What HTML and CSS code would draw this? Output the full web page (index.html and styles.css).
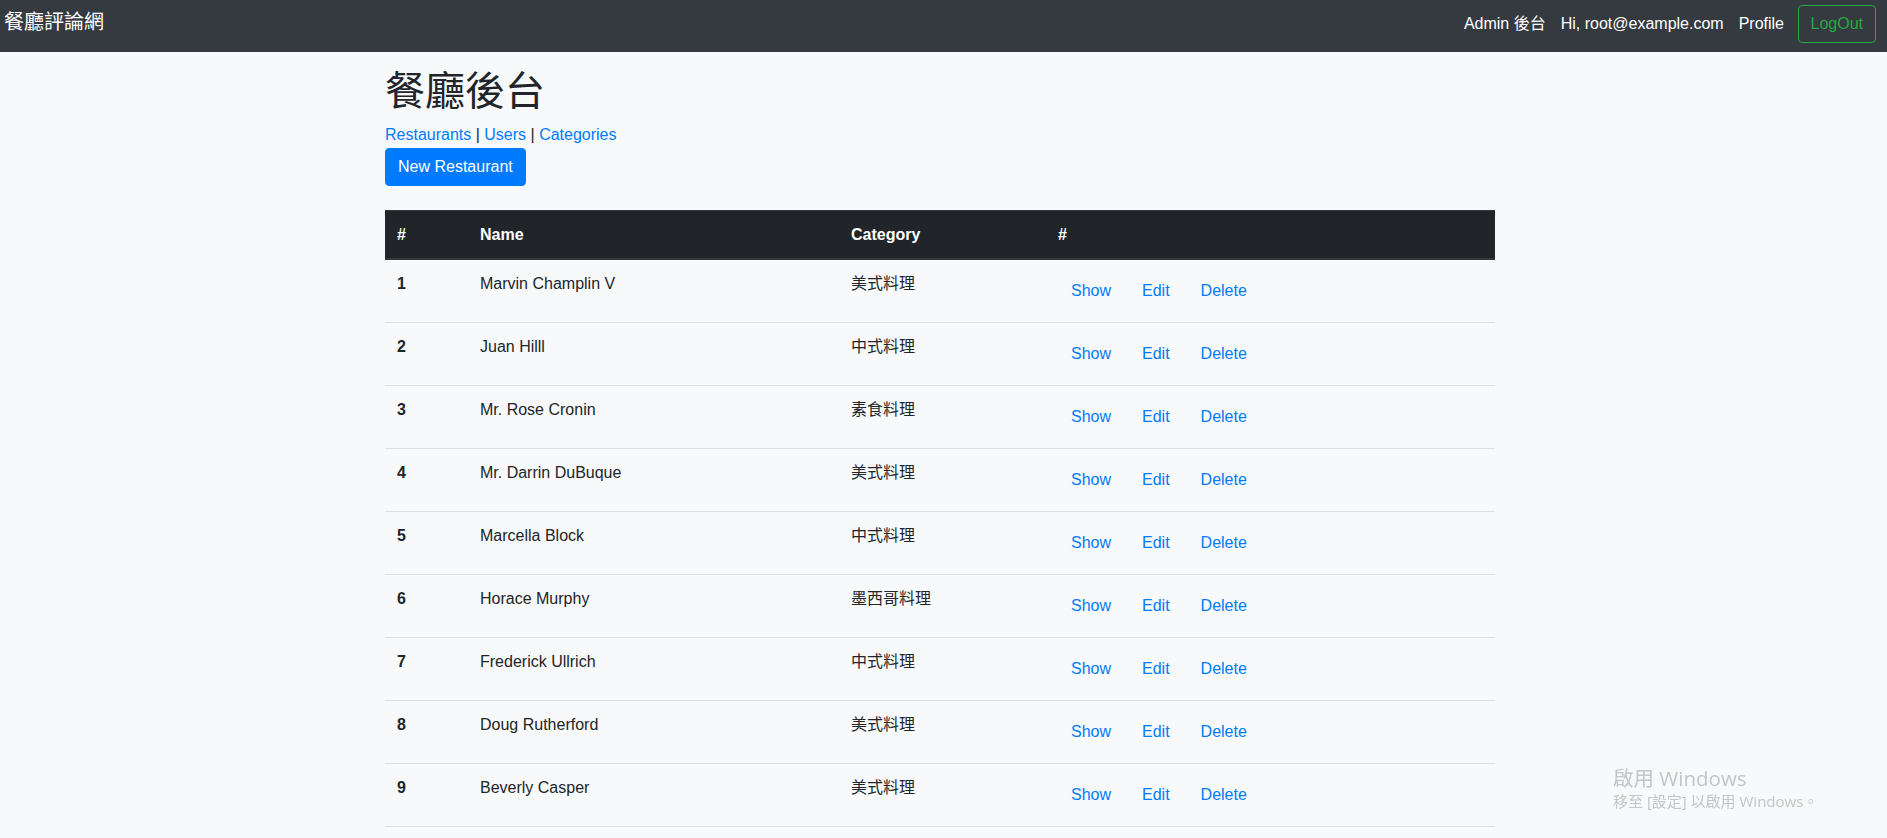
FILE: index.html
```html
<!DOCTYPE html>
<html lang="zh-Hant">
<head>
<meta charset="utf-8">
<title>餐廳評論網</title>
<link rel="stylesheet" href="styles.css">
</head>
<body>
<nav class="topbar">
  <a class="brand" href="#">餐廳評論網</a>
  <div class="topnav">
    <a class="navlink" href="#">Admin 後台</a>
    <a class="navlink" href="#">Hi, root@example.com</a>
    <a class="navlink" href="#">Profile</a>
    <a class="btn-outline" href="#">LogOut</a>
  </div>
</nav>

<main class="container">
  <h1 class="title">餐廳後台</h1>
  <div class="sublinks">
    <a href="#">Restaurants</a> | <a href="#">Users</a> | <a href="#">Categories</a>
  </div>
  <a class="btn-primary" href="#">New Restaurant</a>

  <table class="data">
    <thead>
      <tr>
        <th class="c-id">#</th>
        <th class="c-name">Name</th>
        <th class="c-cat">Category</th>
        <th class="c-act">#</th>
      </tr>
    </thead>
    <tbody>
      <tr><td class="idcell">1</td><td>Marvin Champlin V</td><td>美式料理</td><td><div class="actions"><a class="btn-link" href="#">Show</a><a class="btn-link" href="#">Edit</a><a class="btn-link" href="#">Delete</a></div></td></tr>
      <tr><td class="idcell">2</td><td>Juan Hilll</td><td>中式料理</td><td><div class="actions"><a class="btn-link" href="#">Show</a><a class="btn-link" href="#">Edit</a><a class="btn-link" href="#">Delete</a></div></td></tr>
      <tr><td class="idcell">3</td><td>Mr. Rose Cronin</td><td>素食料理</td><td><div class="actions"><a class="btn-link" href="#">Show</a><a class="btn-link" href="#">Edit</a><a class="btn-link" href="#">Delete</a></div></td></tr>
      <tr><td class="idcell">4</td><td>Mr. Darrin DuBuque</td><td>美式料理</td><td><div class="actions"><a class="btn-link" href="#">Show</a><a class="btn-link" href="#">Edit</a><a class="btn-link" href="#">Delete</a></div></td></tr>
      <tr><td class="idcell">5</td><td>Marcella Block</td><td>中式料理</td><td><div class="actions"><a class="btn-link" href="#">Show</a><a class="btn-link" href="#">Edit</a><a class="btn-link" href="#">Delete</a></div></td></tr>
      <tr><td class="idcell">6</td><td>Horace Murphy</td><td>墨西哥料理</td><td><div class="actions"><a class="btn-link" href="#">Show</a><a class="btn-link" href="#">Edit</a><a class="btn-link" href="#">Delete</a></div></td></tr>
      <tr><td class="idcell">7</td><td>Frederick Ullrich</td><td>中式料理</td><td><div class="actions"><a class="btn-link" href="#">Show</a><a class="btn-link" href="#">Edit</a><a class="btn-link" href="#">Delete</a></div></td></tr>
      <tr><td class="idcell">8</td><td>Doug Rutherford</td><td>美式料理</td><td><div class="actions"><a class="btn-link" href="#">Show</a><a class="btn-link" href="#">Edit</a><a class="btn-link" href="#">Delete</a></div></td></tr>
      <tr><td class="idcell">9</td><td>Beverly Casper</td><td>美式料理</td><td><div class="actions"><a class="btn-link" href="#">Show</a><a class="btn-link" href="#">Edit</a><a class="btn-link" href="#">Delete</a></div></td></tr>
    </tbody>
  </table>
</main>

<div class="watermark">
  <div class="wm-title">啟用 Windows</div>
  <div class="wm-sub">移至 [設定] 以啟用 Windows。</div>
</div>
</body>
</html>
```

FILE: styles.css
```css
* { box-sizing: border-box; }

html, body { margin: 0; padding: 0; }

body {
  background: #f8f9fa;
  color: #212529;
  font-family: "Liberation Sans", "Noto Sans CJK TC", sans-serif;
  font-size: 16px;
  line-height: 24px;
  overflow: hidden;
}

a { text-decoration: none; color: #007bff; }

/* ---------- top bar ---------- */
.topbar {
  display: flex;
  justify-content: space-between;
  align-items: flex-start;
  height: 52px;
  background: #343a40;
  padding: 5px 11px 0 4px;
}

.brand {
  color: #fff;
  font-size: 20px;
  line-height: 30px;
  padding-top: 2px;
}

.topnav {
  display: flex;
  align-items: center;
  height: 38px;
}

.navlink {
  color: #fff;
  padding: 0 7.5px;
  line-height: 24px;
}

.btn-outline {
  margin-left: 6px;
  color: #28a745;
  border: 1px solid #28a745;
  border-radius: 4px;
  padding: 6px 12px;
  line-height: 24px;
}

/* ---------- content ---------- */
.container {
  width: 1110px;
  margin-left: calc(50% - 558.5px);
  padding-top: 15px;
}

.title {
  margin: 0 0 8px;
  font-size: 40px;
  line-height: 48px;
  font-weight: 400;
}

.sublinks { line-height: 24px; }

.btn-primary {
  display: inline-block;
  margin-top: 1px;
  background: #007bff;
  border: 1px solid #007bff;
  color: #fff;
  border-radius: 4px;
  padding: 6px 12px;
  line-height: 24px;
}

/* ---------- table ---------- */
.data {
  width: 100%;
  margin-top: 24px;
  border-collapse: collapse;
  table-layout: fixed;
}

.data th {
  text-align: left;
  vertical-align: bottom;
  padding: 12px 12px 11px;
  background: #212529;
  color: #fff;
  font-weight: 700;
  border-top: 1px solid #32383e;
  border-bottom: 2px solid #32383e;
}

.c-id { width: 83px; }
.c-name { width: 371px; }
.c-cat { width: 207px; }

.data td {
  padding: 12px;
  vertical-align: top;
  border-top: 1px solid #dee2e6;
}

.data tbody tr:last-child td { border-bottom: 1px solid #dee2e6; }

.data td.idcell { font-weight: 700; }

.actions {
  display: flex;
  gap: 5px;
}

.btn-link {
  display: inline-block;
  padding: 6px 12px;
  border: 1px solid transparent;
  line-height: 24px;
  color: #007bff;
}

/* ---------- windows watermark ---------- */
.watermark {
  position: fixed;
  left: 1613px;
  top: 766px;
  color: #c4c5c6;
  font-family: "Open Sans", "Noto Sans CJK TC", sans-serif;
  pointer-events: none;
}

.wm-title { font-size: 20.5px; line-height: 25px; }
.wm-sub { font-size: 15px; line-height: 20px; }
```
